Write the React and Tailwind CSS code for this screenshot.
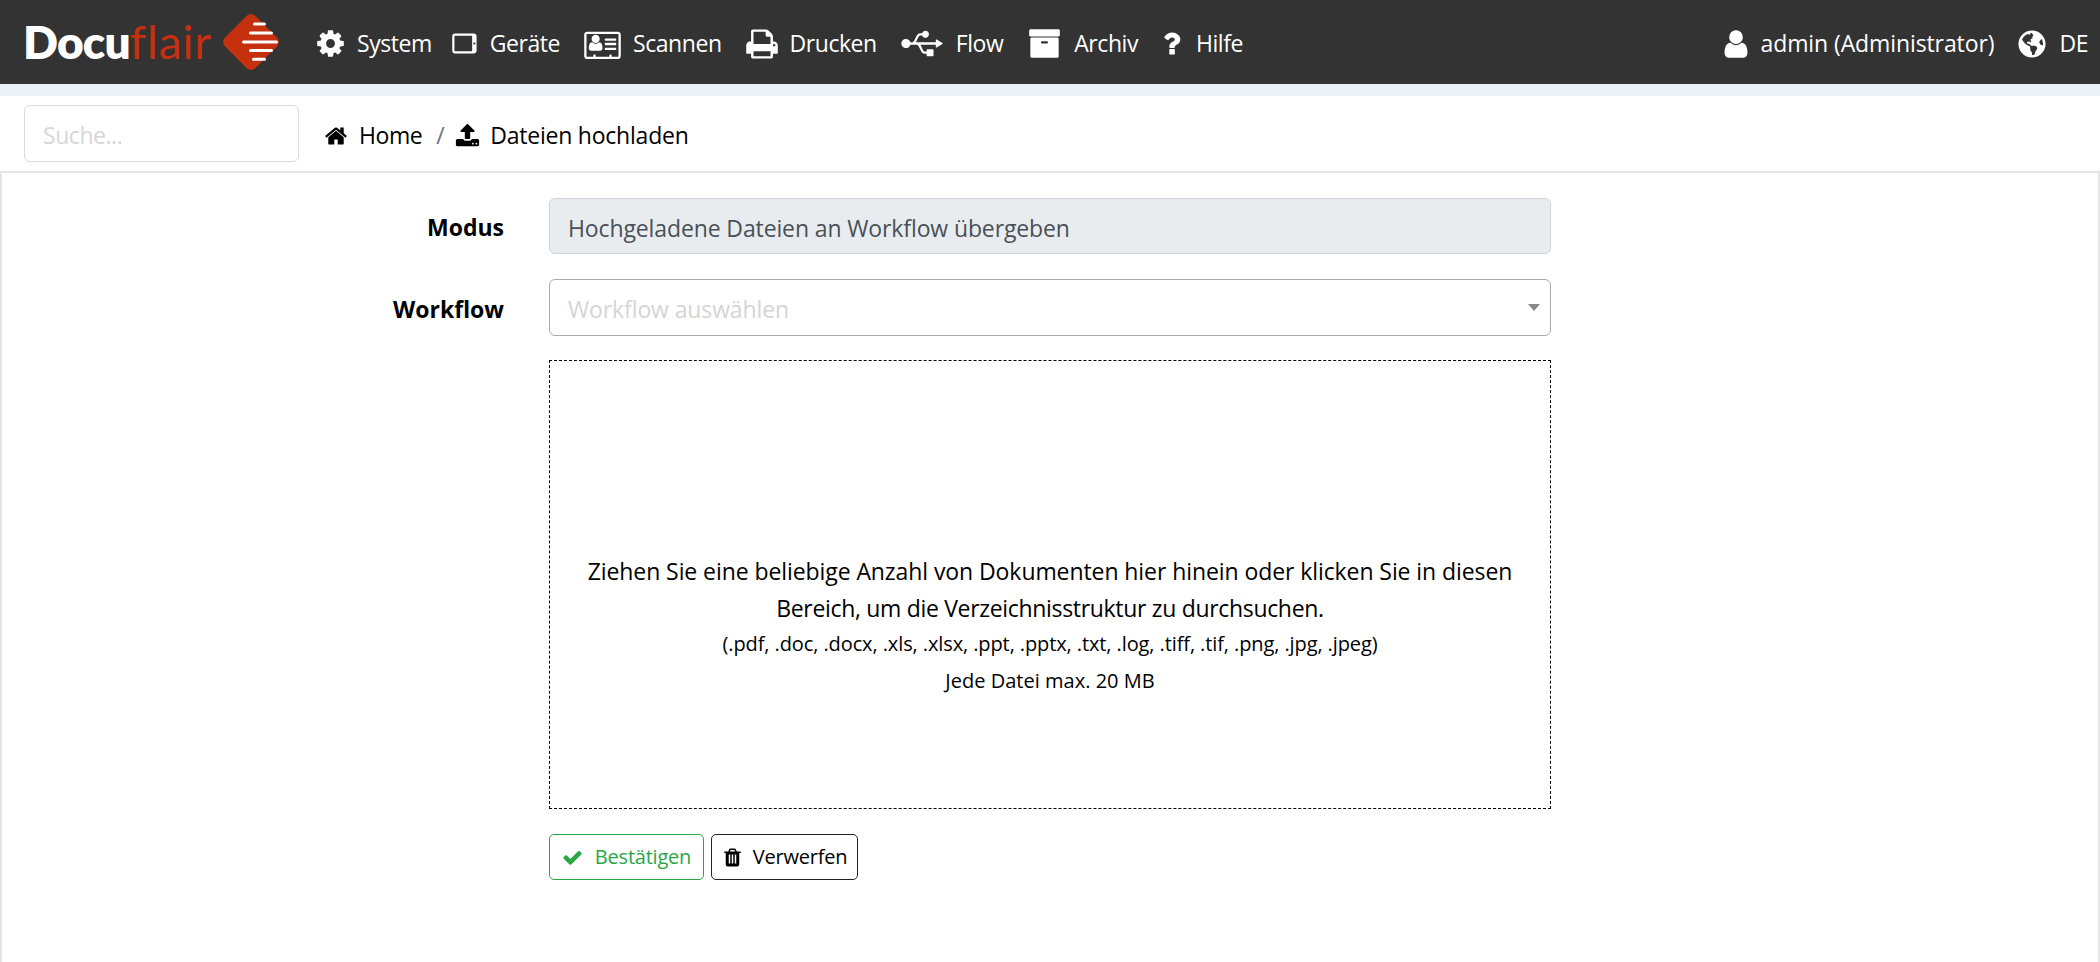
import React from "react";
import { FaUsb, FaGlobeAmericas } from "react-icons/fa";

const P = {
  cog: "M1152 896q0-106-75-181t-181-75-181 75-75 181 75 181 181 75 181-75 75-181zm512-109v222q0 12-8 23t-20 13l-185 28q-19 54-39 91 35 50 107 138 10 12 10 25t-9 23q-27 37-99 108t-94 71q-12 0-26-9l-138-108q-44 23-91 38-16 136-29 186-7 28-36 28h-222q-14 0-24.5-8.5t-11.5-21.5l-28-184q-49-16-90-37l-141 107q-10 9-25 9-14 0-25-11-126-114-165-168-7-10-7-23 0-12 8-23 15-21 51-66.5t54-70.5q-27-50-41-99l-183-27q-13-2-21-12.5t-8-23.5v-222q0-12 8-23t19-13l186-28q14-46 39-92-40-57-107-138-10-12-10-24 0-10 9-23 26-36 98.5-107.5t94.5-71.5q13 0 26 10l138 107q44-23 91-38 16-136 29-186 7-28 36-28h222q14 0 24.5 8.5t11.5 21.5l28 184q49 16 90 37l142-107q9-9 24-9 13 0 25 10 129 119 165 170 7 8 7 22 0 12-8 23-15 21-51 66.5t-54 70.5q26 50 41 98l183 28q13 2 21 12.5t8 23.5z",
  tablet: "M960 1408q0-26-19-45t-45-19-45 19-19 45 19 45 45 19 45-19 19-45zm384-160v-960q0-13-9.5-22.5t-22.5-9.5h-832q-13 0-22.5 9.5t-9.5 22.5v960q0 13 9.5 22.5t22.5 9.5h832q13 0 22.5-9.5t9.5-22.5zm128-960v1088q0 66-47 113t-113 47h-832q-66 0-113-47t-47-113v-1088q0-66 47-113t113-47h832q66 0 113 47t47 113z",
  card: "M1024 1131q0 64-37 106.5t-91 42.5h-512q-54 0-91-42.5t-37-106.5 9-117.5 29.5-103 60.5-78 97-28.5q6 4 30 18t37.5 21.5 35.5 17.5 43 14.5 42 4.5 42-4.5 43-14.5 35.5-17.5 37.5-21.5 30-18q57 0 97 28.5t60.5 78 29.5 103 9 117.5zm-157-520q0 94-66.5 160.5t-160.5 66.5-160.5-66.5-66.5-160.5 66.5-160.5 160.5-66.5 160.5 66.5 66.5 160.5zm925 520v64q0 14-9 23t-23 9h-576q-14 0-23-9t-9-23v-64q0-14 9-23t23-9h576q14 0 23 9t9 23zm0-260v56q0 16-11.5 28t-28.5 12h-560q-17 0-28.5-12t-11.5-28v-56q0-16 11.5-28t28.5-12h560q17 0 28.5 12t11.5 28zm0-252v64q0 14-9 23t-23 9h-576q-14 0-23-9t-9-23v-64q0-14 9-23t23-9h576q14 0 23 9t9 23zm128 960v-1216q0-13-9.5-22.5t-22.5-9.5h-1728q-13 0-22.5 9.5t-9.5 22.5v1216q0 13 9.5 22.5t22.5 9.5h352v-96q0-14 9-23t23-9h64q14 0 23 9t9 23v96h768v-96q0-14 9-23t23-9h64q14 0 23 9t9 23v96h352q13 0 22.5-9.5t9.5-22.5zm128-1216v1216q0 66-47 113t-113 47h-1728q-66 0-113-47t-47-113v-1216q0-66 47-113t113-47h1728q66 0 113 47t47 113z",
  print: "M448 1536h896v-256h-896v256zm0-640h896v-384h-160q-40 0-68-28t-28-68v-160h-640v640zm1152 64q0-26-19-45t-45-19-45 19-19 45 19 45 45 19 45-19 19-45zm128 0v416q0 13-9.5 22.5t-22.5 9.5h-224v160q0 40-28 68t-68 28h-960q-40 0-68-28t-28-68v-160h-224q-13 0-22.5-9.5t-9.5-22.5v-416q0-79 56.5-135.5t135.5-56.5h64v-544q0-40 28-68t68-28h672q40 0 88 20t76 48l152 152q28 28 48 76t20 88v256h64q79 0 135.5 56.5t56.5 135.5z",
  archive: "M1088 832q0-26-19-45t-45-19h-256q-26 0-45 19t-19 45 19 45 45 19h256q26 0 45-19t19-45zm576-192v960q0 26-19 45t-45 19h-1408q-26 0-45-19t-19-45v-960q0-26 19-45t45-19h1408q26 0 45 19t19 45zm64-448v256q0 26-19 45t-45 19h-1536q-26 0-45-19t-19-45v-256q0-26 19-45t45-19h1536q26 0 45 19t19 45z",
  question: "M1088 1256v240q0 16-12 28t-28 12h-240q-16 0-28-12t-12-28v-240q0-16 12-28t28-12h240q16 0 28 12t12 28zm316-600q0 54-15.5 101t-35 76.5-55 59.5-57.5 43.5-61 35.5q-41 23-68.5 65t-27.5 67q0 17-12 32.5t-28 15.5h-240q-15 0-25.5-18.5t-10.5-37.5v-45q0-83 65-156.5t143-108.5q59-27 84-56t25-76q0-42-46.5-74t-107.5-32q-65 0-108 29-35 25-107 115-13 16-31 16-12 0-25-8l-164-125q-13-10-15.5-25t5.5-28q160-266 464-266 80 0 161 31t146 83 106 127.5 41 158.5z",
  user: "M1536 1399q0 109-62.5 187t-150.5 78h-854q-88 0-150.5-78t-62.5-187q0-85 8.5-160.5t31.5-152 58.5-131 94-89 134.5-34.5q131 128 313 128t313-128q76 0 134.5 34.5t94 89 58.5 131 31.5 152 8.5 160.5zm-256-887q0 159-112.5 271.5t-271.5 112.5-271.5-112.5-112.5-271.5 112.5-271.5 271.5-112.5 271.5 112.5 112.5 271.5z",
  home: "M1472 992v480q0 26-19 45t-45 19h-384v-384h-256v384h-384q-26 0-45-19t-19-45v-480q0-1 .5-3t.5-3l575-474 575 474q1 2 1 6zm223-69l-62 74q-8 9-21 11h-3q-13 0-21-7l-692-577-692 577q-12 8-24 7-13-2-21-11l-62-74q-8-10-7-23.5t11-21.5l719-599q32-26 76-26t76 26l244 204v-195q0-14 9-23t23-9h192q14 0 23 9t9 23v408l219 182q10 8 11 21.5t-7 23.5z",
  upload: "M1344 1472q0-26-19-45t-45-19-45 19-19 45 19 45 45 19 45-19 19-45zm256 0q0-26-19-45t-45-19-45 19-19 45 19 45 45 19 45-19 19-45zm128-224v320q0 40-28 68t-68 28h-1472q-40 0-68-28t-28-68v-320q0-40 28-68t68-28h427q21 56 70.5 92t110.5 36h256q61 0 110.5-36t70.5-92h427q40 0 68 28t28 68zm-325-648q-17 40-59 40h-256v448q0 26-19 45t-45 19h-256q-26 0-45-19t-19-45v-448h-256q-42 0-59-40-17-39 14-69l448-448q18-19 45-19t45 19l448 448q31 30 14 69z",
  check: "M1671 566q0 40-28 68l-724 724-136 136q-28 28-68 28t-68-28l-136-136-362-362q-28-28-28-68t28-68l136-136q28-28 68-28t68 28l294 295 656-657q28-28 68-28t68 28l136 136q28 28 28 68z",
  trash: "M704 1376v-704q0-14-9-23t-23-9h-64q-14 0-23 9t-9 23v704q0 14 9 23t23 9h64q14 0 23-9t9-23zm256 0v-704q0-14-9-23t-23-9h-64q-14 0-23 9t-9 23v704q0 14 9 23t23 9h64q14 0 23-9t9-23zm256 0v-704q0-14-9-23t-23-9h-64q-14 0-23 9t-9 23v704q0 14 9 23t23 9h64q14 0 23-9t9-23zm-544-992h448l-48-117q-7-9-17-11h-317q-10 2-17 11zm928 32v64q0 14-9 23t-23 9h-96v948q0 83-47 143.5t-113 60.5h-832q-66 0-113-58.5t-47-141.5v-952h-96q-14 0-23-9t-9-23v-64q0-14 9-23t23-9h309l70-167q15-37 54-63t79-26h320q40 0 79 26t54 63l70 167h309q14 0 23 9t9 23z",
};

function Fa({ d, vb = "0 0 1792 1792", className }) {
  return (
    <svg viewBox={vb} className={className} fill="currentColor" aria-hidden="true">
      <path d={d} />
    </svg>
  );
}

function Logo() {
  return (
    <div className="flex items-center w-[254px] shrink-0 -mt-[3px]">
      <span className="font-['Lato',sans-serif] font-extrabold text-[46px] leading-none text-white -ml-[1px] tracking-[-0.8px]">Docu</span>
      <span className="font-['Lato',sans-serif] font-normal text-[46px] leading-none text-[#c5300f] tracking-[0.9px]">flair</span>
      <svg viewBox="0 0 56 56" className="w-[56px] h-[56px] shrink-0 ml-[11px]">
        <rect x="6.5" y="6.5" width="43" height="43" rx="6" fill="#c5300f" transform="rotate(45 28 28)" />
        <g fill="#ffffff">
          <rect x="30" y="8.6" width="13" height="3" rx="1.5" />
          <rect x="26" y="17.4" width="24" height="3" rx="1.5" />
          <rect x="19" y="26.4" width="36" height="3" rx="1.5" />
          <rect x="26" y="35" width="24" height="3" rx="1.5" />
          <rect x="29" y="43.8" width="14" height="3" rx="1.5" />
        </g>
      </svg>
    </div>
  );
}

function NavItem({ icon, label, gap = "gap-[13px]", text = "" }) {
  return (
    <a className={`flex items-center ${gap} text-white`}>
      {icon}
      <span className={text}>{label}</span>
    </a>
  );
}

export default function App() {
  return (
    <div className="h-screen overflow-hidden bg-white flex flex-col text-[23px] font-['Open_Sans','Noto_Sans',sans-serif] tracking-[-0.45px] text-black">
      <nav className="h-[84px] shrink-0 bg-[#333333] flex items-center pt-[3px] pl-[24px] pr-[12px] text-[#ffffff]">
        <Logo />
        <div className="flex items-center gap-[24px] ml-[38px]">
          <NavItem label="System" icon={<Fa d={P.cog} className="w-[31px] h-[31px] -mx-[1px]" />} gap="gap-[12px]" />
          <NavItem label="Geräte" icon={<Fa d={P.tablet} className="w-[31px] h-[31px] -rotate-90 -ml-[6px] -mr-[3px]" />} gap="gap-[12px]" />
          <NavItem label="Scannen" icon={<Fa d={P.card} vb="0 0 2048 1792" className="w-[37px] h-[32px]" />} gap="gap-[12px]" />
          <NavItem label="Drucken" icon={<Fa d={P.print} className="w-[34px] h-[34px] -ml-[1px] -mr-[2px]" />} />
          <NavItem label="Flow" icon={<FaUsb className="w-[42px] h-[33px]" />} />
          <NavItem label="Archiv" icon={<Fa d={P.archive} className="w-[33px] h-[33px] ml-[1px] -mr-[1px]" />} gap="gap-[14px]" />
          <NavItem label="Hilfe" icon={<Fa d={P.question} className="w-[31px] h-[31px] -ml-[6px] -mr-[7px]" />} gap="gap-[16px]" />
        </div>
        <div className="ml-auto flex items-center gap-[24px]">
          <NavItem label="admin (Administrator)" text="tracking-[-0.1px]" icon={<Fa d={P.user} className="w-[32px] h-[32px] -mx-[4px]" />} />
          <NavItem label="DE" icon={<FaGlobeAmericas className="w-[28px] h-[28px]" />} />
        </div>
      </nav>

      <div className="h-[12px] shrink-0 bg-[#ebf3f7]" />

      <div className="h-[75px] shrink-0 flex items-center pl-[24px]">
        <input
          readOnly
          placeholder="Suche..."
          className="w-[275px] h-[57px] px-[18px] pt-[2px] border-[1.5px] border-[#d8dade] rounded-[6px] placeholder:text-[#d9d6d6] outline-none"
        />
        <div className="flex items-center ml-[25px] pt-[4px]">
          <Fa d={P.home} className="w-[24px] h-[24px] mr-[11px]" />
          <span>Home</span>
          <span className="ml-[14px] mr-[11px] text-[#6c757d]">/</span>
          <Fa d={P.upload} className="w-[25px] h-[25px] mr-[10px]" />
          <span className="tracking-[-0.22px]">Dateien hochladen</span>
        </div>
      </div>

      <main className="flex-1 border-t-2 border-x-2 border-[#e5e5e5] pt-[25px]">
        <div className="grid grid-cols-[547px_1002px] gap-y-[25px]">
          <label className="self-center text-right pr-[45px] pt-[3px] font-bold tracking-normal">Modus</label>
          <div className="h-[56px] flex items-center px-[18px] pt-[4px] bg-[#e9ecef] border border-[#ced4da] rounded-[6px] text-[#495057] tracking-[-0.12px]">
            Hochgeladene Dateien an Workflow übergeben
          </div>

          <label className="self-center text-right pr-[45px] pt-[3px] font-bold tracking-normal">Workflow</label>
          <div className="h-[57px] flex items-center justify-between pl-[18px] pr-[10px] border-[1.5px] border-[#aaaaaa] rounded-[6px] text-[#d6d4d4] tracking-[-0.12px]">
            <span className="pt-[4px]">Workflow auswählen</span>
            <span className="w-0 h-0 border-x-[6px] border-x-transparent border-t-[7px] border-t-[#888888]" />
          </div>

          <div className="col-start-2 -mt-[1px] h-[449px] border border-dashed border-black flex flex-col items-center pt-[192px] text-center leading-[36.5px] tracking-[-0.08px]">
            <p>
              Ziehen Sie eine beliebige Anzahl von Dokumenten hier hinein oder klicken Sie in diesen
              <br />
              <span className="tracking-[-0.32px]">Bereich, um die Verzeichnisstruktur zu durchsuchen.</span>
            </p>
            <p className="text-[20px] tracking-[-0.1px]">(.pdf, .doc, .docx, .xls, .xlsx, .ppt, .pptx, .txt, .log, .tiff, .tif, .png, .jpg, .jpeg)</p>
            <p className="text-[20px] tracking-[0.02px]">Jede Datei max. 20 MB</p>
          </div>

          <div className="col-start-2 flex gap-[7px] text-[20px] tracking-[-0.22px]">
            <button className="h-[46px] w-[155px] flex items-center justify-center gap-[12px] border border-[#28a745] rounded-[5px] text-[#28a745]">
              <Fa d={P.check} className="w-[21px] h-[21px]" />
              <span>Bestätigen</span>
            </button>
            <button className="h-[46px] w-[147px] flex items-center justify-center gap-[10px] border border-[#222222] rounded-[5px] text-black">
              <Fa d={P.trash} className="w-[21px] h-[21px]" />
              <span>Verwerfen</span>
            </button>
          </div>
        </div>
      </main>
    </div>
  );
}
